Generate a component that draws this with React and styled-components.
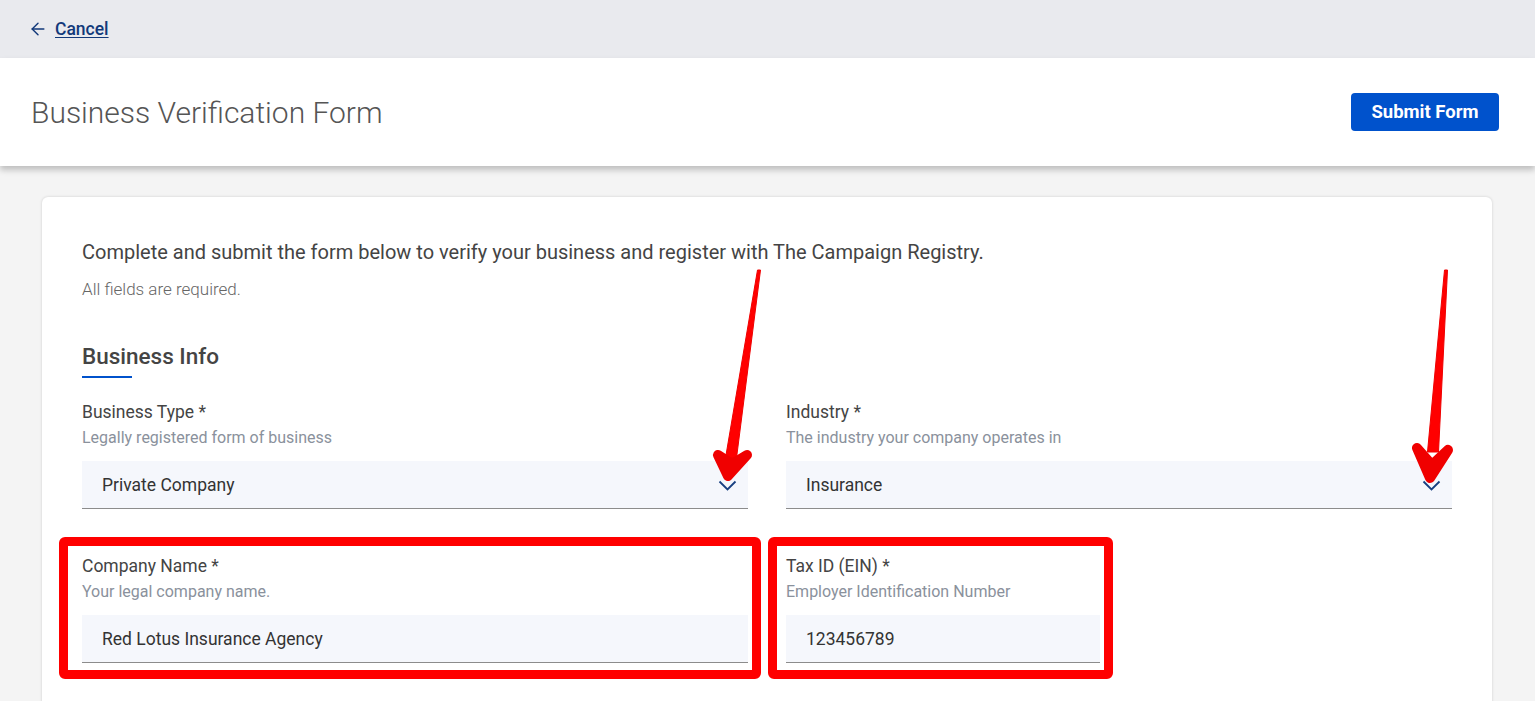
import styled, { createGlobalStyle } from "styled-components";
import { ArrowLeft } from "lucide-react";

const GlobalStyle = createGlobalStyle`
  body {
    margin: 0;
    background: #f4f4f4;
    font-family: Roboto, "Liberation Sans", sans-serif;
    overflow: hidden;
  }
`;

const Page = styled.div`
  position: relative;
  min-height: 701px;
`;

const TopBar = styled.div`
  height: 58px;
  background: #e9eaee;
  display: flex;
  align-items: center;
  padding-left: 28px;
`;

const BackLink = styled.a`
  display: flex;
  align-items: center;
  gap: 7px;
  color: #12397a;
  font-size: 17.5px;
  font-weight: 500;
  text-decoration: underline;
  text-underline-offset: 2px;
  cursor: pointer;
`;

const Header = styled.header`
  position: relative;
  z-index: 1;
  height: 108px;
  background: #fff;
  display: flex;
  align-items: center;
  justify-content: space-between;
  padding: 0 36px 0 31px;
  box-shadow: 0 4px 6px rgba(0, 0, 0, 0.22);
`;

const Title = styled.h1`
  margin: 0;
  font-size: 30px;
  font-weight: 300;
  color: #555;
`;

const SubmitButton = styled.button`
  height: 38px;
  width: 148px;
  border: none;
  border-radius: 4px;
  background: #0052cc;
  color: #fff;
  font-family: inherit;
  font-size: 18.5px;
  font-weight: 700;
  cursor: pointer;
`;

const Main = styled.main`
  padding: 31px 43px 0 42px;
`;

const Card = styled.section`
  background: #fff;
  border-radius: 6px;
  box-shadow: 0 0 3px rgba(0, 0, 0, 0.16);
  padding: 43px 40px 80px;
`;

const Intro = styled.p`
  margin: 0;
  font-size: 20px;
  line-height: 24px;
  color: #444;
`;

const Note = styled.p`
  margin: 15px 0 0;
  font-size: 17px;
  line-height: 20px;
  font-weight: 300;
  color: #666;
`;

const SectionTitle = styled.h2`
  margin: 43px 0 0;
  font-size: 22.5px;
  line-height: 28px;
  font-weight: 500;
  color: #444;

  &::after {
    content: "";
    display: block;
    width: 50px;
    height: 2px;
    margin-top: 6px;
    background: #0052cc;
  }
`;

const FieldGrid = styled.div`
  display: grid;
  grid-template-columns: repeat(4, 1fr);
  column-gap: 38px;
  row-gap: 47px;
  margin-top: 24px;
`;

const Field = styled.div`
  position: relative;
  grid-column: span ${(props) => props.$span || 1};

  &::before {
    content: "";
    display: ${(props) => (props.$marked ? "block" : "none")};
    position: absolute;
    top: -19px;
    bottom: -16px;
    left: ${(props) => (props.$wide ? "-23px" : "-18px")};
    right: -13px;
    border: 9px solid #ff0000;
    border-radius: 6px;
    pointer-events: none;
  }
`;

const Label = styled.div`
  font-size: 17.5px;
  line-height: 20px;
  color: #444;
`;

const Helper = styled.div`
  margin-top: 7px;
  font-size: 16px;
  line-height: 18px;
  color: #8a919c;
`;

const InputBox = styled.div`
  margin-top: 14px;
  height: 47px;
  background: #f5f7fc;
  border-bottom: 1px solid #8c8c8c;
  display: flex;
  align-items: center;
  justify-content: space-between;
  padding: 0 11px 0 20px;
  font-size: 17.5px;
  color: #333;
`;

const ChevronIcon = styled.svg`
  width: 19px;
  height: 11px;
  margin-top: 2px;
  color: #173f80;
`;

const Overlay = styled.svg`
  position: absolute;
  top: 0;
  left: 0;
  width: 1535px;
  height: 701px;
  pointer-events: none;
  z-index: 5;
`;

const arrows = [
  {
    top: [759, 270],
    base: [731, 458],
    left: [718, 455],
    tip: [728, 476],
    right: [747, 455],
    notch: [732, 464],
  },
  {
    top: [1446, 270],
    base: [1433, 452],
    left: [1417, 448],
    tip: [1430, 478],
    right: [1448, 450],
    notch: [1432, 465],
  },
];

const Arrow = ({ a }) => {
  const shaft = `M${a.top[0] - 1.5},${a.top[1]} L${a.top[0] + 1.5},${a.top[1]} L${a.base[0] + 5.5},${a.base[1]} L${a.base[0] - 5.5},${a.base[1]} Z`;
  const head = `M${a.left[0]},${a.left[1]} L${a.tip[0]},${a.tip[1]} L${a.right[0]},${a.right[1]} L${a.notch[0]},${a.notch[1]} Z`;
  return (
    <g fill="#ff0000" stroke="#f00000">
      <path d={shaft} strokeWidth="1" />
      <path d={head} strokeWidth="10" strokeLinejoin="round" strokeLinecap="round" />
    </g>
  );
};

const Chevron = () => (
  <ChevronIcon viewBox="0 0 19 11">
    <path
      d="M1.5 1.5 L9.5 9.5 L17.5 1.5"
      fill="none"
      stroke="currentColor"
      strokeWidth="1.8"
    />
  </ChevronIcon>
);

const Select = ({ value }) => (
  <InputBox>
    <span>{value}</span>
    <Chevron />
  </InputBox>
);

const App = () => {
  return (
    <Page>
      <GlobalStyle />
      <TopBar>
        <BackLink>
          <ArrowLeft size={20} strokeWidth={1.7} />
          Cancel
        </BackLink>
      </TopBar>
      <Header>
        <Title>Business Verification Form</Title>
        <SubmitButton>Submit Form</SubmitButton>
      </Header>
      <Main>
        <Card>
          <Intro>
            Complete and submit the form below to verify your business and
            register with The Campaign Registry.
          </Intro>
          <Note>All fields are required.</Note>
          <SectionTitle>Business Info</SectionTitle>
          <FieldGrid>
            <Field $span={2}>
              <Label>Business Type *</Label>
              <Helper>Legally registered form of business</Helper>
              <Select value="Private Company" />
            </Field>
            <Field $span={2}>
              <Label>Industry *</Label>
              <Helper>The industry your company operates in</Helper>
              <Select value="Insurance" />
            </Field>
            <Field $span={2} $marked $wide>
              <Label>Company Name *</Label>
              <Helper>Your legal company name.</Helper>
              <InputBox>Red Lotus Insurance Agency</InputBox>
            </Field>
            <Field $marked>
              <Label>Tax ID (EIN) *</Label>
              <Helper>Employer Identification Number</Helper>
              <InputBox>123456789</InputBox>
            </Field>
          </FieldGrid>
        </Card>
      </Main>
      <Overlay viewBox="0 0 1535 701">
        {arrows.map((a, i) => (
          <Arrow key={i} a={a} />
        ))}
      </Overlay>
    </Page>
  );
};

export default App;
